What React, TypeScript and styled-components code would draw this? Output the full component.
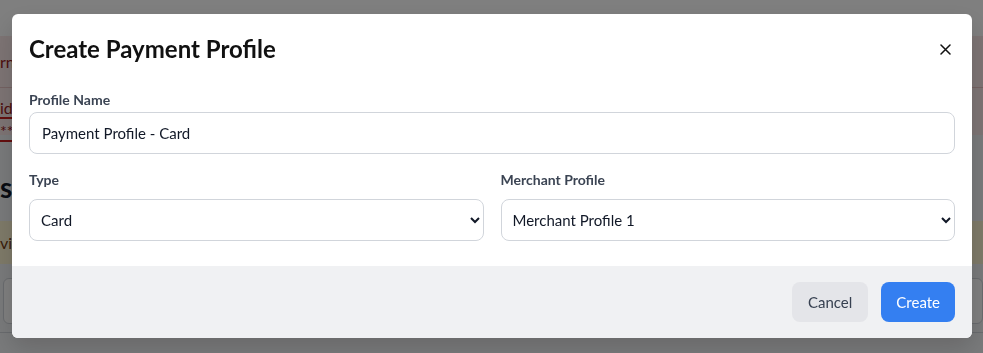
import styled, { createGlobalStyle } from 'styled-components'

const GlobalStyle = createGlobalStyle`
  html, body {
    margin: 0;
    padding: 0;
  }
  body {
    font-family: Lato, 'Noto Sans', sans-serif;
    background: #f3f4f6;
    overflow: hidden;
  }
`

// --- page behind the dialog ---

const Page = styled.div`
  display: flex;
  flex-direction: column;
  height: 353px;
`

const TopNav = styled.div`
  height: 36px;
  background: #ffffff;
`

const DangerPanel = styled.div`
  display: flex;
  flex-direction: column;
  background: #fbe9e9;
  color: #9b1c1c;
  font-size: 16px;
  height: 99px;
  white-space: nowrap;
`

const DangerRow = styled.div<{ $pad: string; $divider?: boolean }>`
  padding: ${({ $pad }) => $pad};
  border-bottom: ${({ $divider }) => ($divider ? '1px solid #e8c4c4' : 'none')};
`

const DangerLink = styled.span`
  display: inline-block;
  color: #9b1c1c;
  line-height: 18px;
  border-bottom: 2px solid #c81e1e;
`

const PageHeading = styled.h1`
  margin: 34px 0 0;
  font-size: 28px;
  font-weight: 700;
  line-height: 36px;
  color: #111827;
`

const WarningBand = styled.div`
  margin-top: 16px;
  height: 43px;
  background: #fdf5d2;
  color: #723b13;
  font-size: 16px;
  line-height: 43px;
  white-space: nowrap;
`

const TableBox = styled.div`
  margin: 14px 0 0 3px;
  height: 44px;
  border: 1px solid #d1d5db;
  border-radius: 6px;
  background: #ffffff;
`

const PageRule = styled.div`
  margin-top: 8px;
  border-top: 1px solid #d1d5db;
`

// --- dialog ---

const Backdrop = styled.div`
  position: fixed;
  inset: 0;
  background: rgba(0, 0, 0, 0.5);
`

const Dialog = styled.div`
  position: fixed;
  top: 14px;
  left: 12px;
  width: 960px;
  background: #ffffff;
  border-radius: 6px;
  overflow: hidden;
  box-shadow: 0 10px 25px rgba(0, 0, 0, 0.15);
`

const DialogHeader = styled.div`
  display: flex;
  align-items: center;
  justify-content: space-between;
  padding: 19px 17px 0;
`

const DialogTitle = styled.h2`
  margin: 0;
  font-size: 24px;
  line-height: 32px;
  font-weight: 700;
  color: #111111;
`

const CloseButton = styled.button`
  display: flex;
  align-items: center;
  justify-content: center;
  width: 20px;
  height: 20px;
  padding: 0;
  border: none;
  background: none;
  cursor: pointer;
`

const DialogBody = styled.div`
  display: flex;
  flex-direction: column;
  padding: 25px 17px 25px;
`

const Field = styled.div<{ $gap: number }>`
  display: flex;
  flex-direction: column;
  gap: ${({ $gap }) => $gap}px;
`

const FieldRow = styled.div`
  display: grid;
  grid-template-columns: 1fr 1fr;
  gap: 17px;
  margin-top: 16px;
`

const Label = styled.label`
  font-size: 14px;
  line-height: 20px;
  font-weight: 700;
  color: #3b4453;
`

const TextInput = styled.input`
  box-sizing: border-box;
  height: 42px;
  padding: 0 12px;
  border: 1px solid #d1d5db;
  border-radius: 8px;
  font-family: inherit;
  font-size: 15px;
  color: #111827;
  outline: none;
`

const Select = styled.select`
  box-sizing: border-box;
  height: 42px;
  padding: 0 3px 0 7px;
  border: 1px solid #d1d5db;
  border-radius: 8px;
  background: #ffffff;
  font-family: inherit;
  font-size: 15px;
  color: #111827;
  outline: none;
`

const DialogFooter = styled.div`
  display: flex;
  justify-content: flex-end;
  gap: 13px;
  padding: 16px 17px;
  background: #f0f1f3;
`

const Button = styled.button<{ $primary?: boolean }>`
  height: 40px;
  padding: ${({ $primary }) => ($primary ? '0 15px' : '0 16px')};
  border: none;
  border-radius: 8px;
  font-family: inherit;
  font-size: 15px;
  background: ${({ $primary }) => ($primary ? '#347ff1' : '#e4e5e9')};
  color: ${({ $primary }) => ($primary ? '#ffffff' : '#374151')};
  cursor: pointer;
`

const CloseIcon = () => (
  <svg width="11" height="11" viewBox="0 0 11 11" fill="none">
    <path d="M1 1L10 10M10 1L1 10" stroke="#111" strokeWidth="1.5" strokeLinecap="round" />
  </svg>
)

export default function App() {
  return (
    <>
      <GlobalStyle />
      <Page>
        <TopNav />
        <DangerPanel>
          <DangerRow $pad="16px 0 16px" $divider>rn</DangerRow>
          <DangerRow $pad="10px 0 0">
            <DangerLink>id</DangerLink>
          </DangerRow>
          <DangerRow $pad="2px 0 0">
            <DangerLink>***</DangerLink>
          </DangerRow>
        </DangerPanel>
        <PageHeading>s</PageHeading>
        <WarningBand>vi</WarningBand>
        <TableBox />
        <PageRule />
      </Page>
      <Backdrop />
      <Dialog role="dialog" aria-labelledby="dialog-title">
        <DialogHeader>
          <DialogTitle id="dialog-title">Create Payment Profile</DialogTitle>
          <CloseButton aria-label="Close">
            <CloseIcon />
          </CloseButton>
        </DialogHeader>
        <DialogBody>
          <Field $gap={2}>
            <Label htmlFor="profile-name">Profile Name</Label>
            <TextInput id="profile-name" defaultValue="Payment Profile - Card" />
          </Field>
          <FieldRow>
            <Field $gap={9}>
              <Label htmlFor="type">Type</Label>
              <Select id="type" defaultValue="card">
                <option value="card">Card</option>
                <option value="bank">Bank Account</option>
              </Select>
            </Field>
            <Field $gap={9}>
              <Label htmlFor="merchant">Merchant Profile</Label>
              <Select id="merchant" defaultValue="m1">
                <option value="m1">Merchant Profile 1</option>
                <option value="m2">Merchant Profile 2</option>
              </Select>
            </Field>
          </FieldRow>
        </DialogBody>
        <DialogFooter>
          <Button>Cancel</Button>
          <Button $primary>Create</Button>
        </DialogFooter>
      </Dialog>
    </>
  )
}
